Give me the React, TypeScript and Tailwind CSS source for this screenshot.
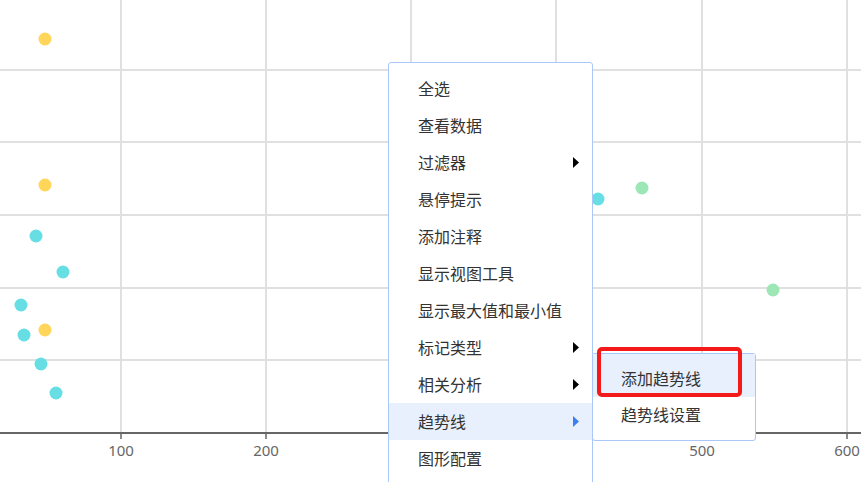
import React from "react";

const xTicks = [
  { x: 121, label: "100" },
  { x: 266, label: "200" },
  { x: 411, label: "" }, // hidden under the menu
  { x: 556, label: "400" },
  { x: 702, label: "500" },
  { x: 847, label: "600" },
];

const yLines = [70, 142, 215, 288, 360];

const points = [
  { x: 45, y: 39, c: "#ffd659" },
  { x: 45, y: 185, c: "#ffd659" },
  { x: 45, y: 330, c: "#ffd659" },
  { x: 598, y: 199, c: "#66dee3" },
  { x: 36, y: 236, c: "#66dee3" },
  { x: 63, y: 272, c: "#66dee3" },
  { x: 21, y: 305, c: "#66dee3" },
  { x: 24, y: 335, c: "#66dee3" },
  { x: 41, y: 364, c: "#66dee3" },
  { x: 56, y: 393, c: "#66dee3" },
  { x: 642, y: 188, c: "#9de6b5" },
  { x: 773, y: 290, c: "#9de6b5" },
];

const menuItems = [
  { label: "全选" },
  { label: "查看数据" },
  { label: "过滤器", sub: true },
  { label: "悬停提示" },
  { label: "添加注释" },
  { label: "显示视图工具" },
  { label: "显示最大值和最小值" },
  { label: "标记类型", sub: true },
  { label: "相关分析", sub: true },
  { label: "趋势线", sub: true, active: true },
  { label: "图形配置" },
];

const Arrow = ({ color }: { color: string }) => (
  <svg width="6" height="11" viewBox="0 0 6 11">
    <path d="M0 0 L6 5.5 L0 11 Z" fill={color} />
  </svg>
);

export default function App() {
  return (
    <div
      className="relative w-[861px] h-[482px] overflow-hidden bg-white"
      style={{ fontFamily: '"Noto Sans", "Noto Sans CJK SC", sans-serif' }}
    >
      {/* Scatter chart */}
      <svg width="861" height="482" className="block">
        {yLines.map((y) => (
          <line key={y} x1="0" x2="861" y1={y} y2={y} stroke="#e0e0e0" strokeWidth="2" />
        ))}
        {xTicks.map((t) => (
          <line key={t.x} x1={t.x} x2={t.x} y1="0" y2="433" stroke="#e0e0e0" strokeWidth="2" />
        ))}
        <line x1="0" x2="861" y1="433" y2="433" stroke="#666666" strokeWidth="2" />
        {xTicks.map((t) => (
          <line key={"t" + t.x} x1={t.x} x2={t.x} y1="433" y2="439" stroke="#666666" strokeWidth="1.5" />
        ))}
        {xTicks
          .filter((t) => t.label)
          .map((t) => (
            <text
              key={"l" + t.x}
              x={t.x}
              y="456"
              textAnchor="middle"
              fontSize="15"
              fill="#666666"
              fontFamily='"Noto Sans", sans-serif'
            >
              {t.label}
            </text>
          ))}
        {points.map((p, i) => (
          <circle key={i} cx={p.x} cy={p.y} r="6.5" fill={p.c} />
        ))}
      </svg>

      {/* Context menu */}
      <div className="absolute left-[388px] top-[62px] w-[205px] h-[440px] bg-white border border-[#a9c8f7] rounded-[3px] pt-[7px] text-[16px] text-[#333333]">
        {menuItems.map((item) => (
          <div
            key={item.label}
            className={
              item.active
                ? "flex items-center justify-between h-[37px] pl-[29px] pr-[13px] bg-[#e9f0fd]"
                : "flex items-center justify-between h-[37px] pl-[29px] pr-[13px]"
            }
          >
            <span>{item.label}</span>
            {item.sub && <Arrow color={item.active ? "#3b7ff2" : "#000000"} />}
          </div>
        ))}
      </div>

      {/* Submenu */}
      <div className="absolute left-[592px] top-[353px] w-[164px] h-[88px] bg-white border border-[#a9c8f7] rounded-[3px] text-[16px] text-[#333333]">
        <div className="h-[43px] bg-[#e9f0fd] pl-[28px] pt-[8px] leading-[35px]">添加趋势线</div>
        <div className="h-[43px] pl-[28px] leading-[37px]">趋势线设置</div>
      </div>

      {/* Highlight box */}
      <div className="absolute left-[597px] top-[347px] w-[145px] h-[50px] border-[4px] border-[#f51a1a] rounded-[5px]" />
    </div>
  );
}
